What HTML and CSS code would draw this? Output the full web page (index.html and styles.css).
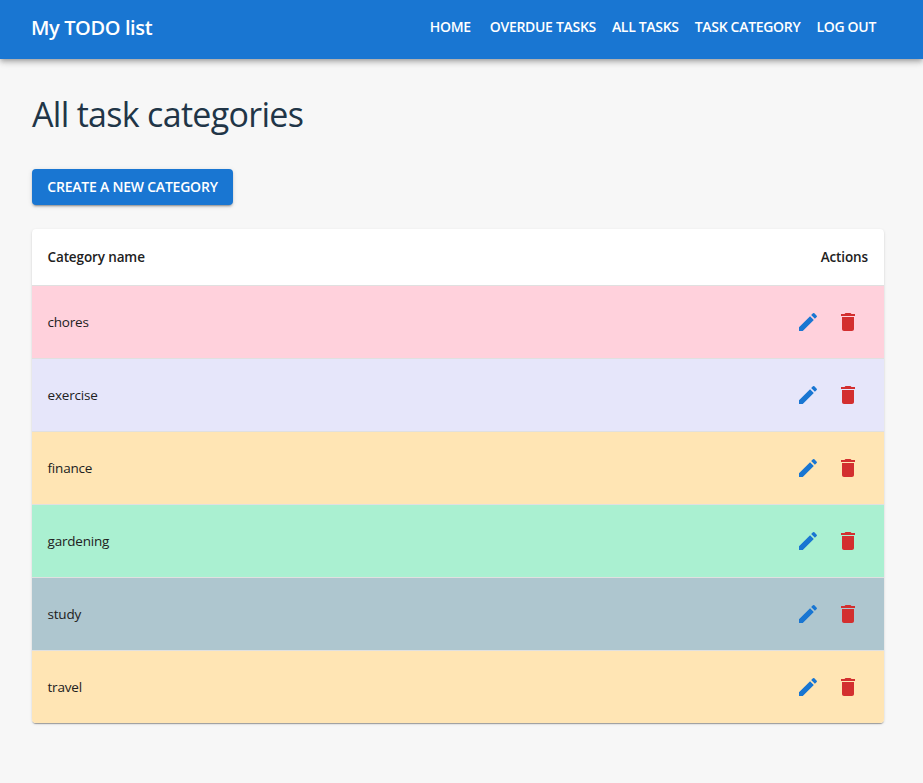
FILE: index.html
```html
<!DOCTYPE html>
<html lang="en">
<head>
<meta charset="utf-8">
<title>My TODO list</title>
<link rel="stylesheet" href="styles.css">
</head>
<body>
<svg class="sprite" width="0" height="0">
  <symbol id="edit" viewBox="0 0 24 24"><path d="M3 17.25V21h3.75L17.81 9.94l-3.75-3.75L3 17.25zM20.71 7.04c.39-.39.39-1.02 0-1.41l-2.34-2.34a.9959.9959 0 0 0-1.41 0l-1.83 1.83 3.75 3.75 1.83-1.83z"/></symbol>
  <symbol id="delete" viewBox="0 0 24 24"><path d="M6 19c0 1.1.9 2 2 2h8c1.1 0 2-.9 2-2V7H6v12zM19 4h-3.5l-1-1h-5l-1 1H5v2h14V4z"/></symbol>
</svg>
<header class="bar">
  <div class="brand">My TODO list</div>
  <nav class="nav">
    <a class="home">HOME</a><a>OVERDUE TASKS</a><a>ALL TASKS</a><a>TASK CATEGORY</a><a>LOG OUT</a>
  </nav>
</header>
<main class="main">
  <h1>All task categories</h1>
  <button class="create">CREATE A NEW CATEGORY</button>
  <section class="table">
    <div class="row head"><span>Category name</span><span class="actions-label">Actions</span></div>
    <div class="row pink"><span>chores</span><div class="actions"><svg class="edit"><use href="#edit"/></svg><svg class="delete"><use href="#delete"/></svg></div></div>
    <div class="row lavender"><span>exercise</span><div class="actions"><svg class="edit"><use href="#edit"/></svg><svg class="delete"><use href="#delete"/></svg></div></div>
    <div class="row orange"><span>finance</span><div class="actions"><svg class="edit"><use href="#edit"/></svg><svg class="delete"><use href="#delete"/></svg></div></div>
    <div class="row green"><span>gardening</span><div class="actions"><svg class="edit"><use href="#edit"/></svg><svg class="delete"><use href="#delete"/></svg></div></div>
    <div class="row blue"><span>study</span><div class="actions"><svg class="edit"><use href="#edit"/></svg><svg class="delete"><use href="#delete"/></svg></div></div>
    <div class="row orange"><span>travel</span><div class="actions"><svg class="edit"><use href="#edit"/></svg><svg class="delete"><use href="#delete"/></svg></div></div>
  </section>
</main>
</body>
</html>
```

FILE: styles.css
```css
* { box-sizing: border-box; }
body { margin: 0; min-height: 783px; background: #f7f7f7; color: #212121; font-family: "Segoe UI", "Open Sans", "Noto Sans", sans-serif; font-size: 13.5px; letter-spacing: -.2px; }
.sprite { display: block; height: 0; }
.bar { height: 59px; padding: 0 47px 4px 31px; display: flex; align-items: center; justify-content: space-between; background: #1976d2; color: #fff; box-shadow: 0 2px 4px -1px rgba(0,0,0,.2), 0 4px 5px rgba(0,0,0,.14), 0 1px 10px rgba(0,0,0,.12); }
.brand { font-size: 20px; font-weight: 600; letter-spacing: -.38px; white-space: nowrap; }
.nav { display: flex; gap: 16px; padding-bottom: 2px; font-size: 14px; font-weight: 600; letter-spacing: -.31px; white-space: nowrap; }
.home { margin-right: 3px; }
.main { padding: 30px 39px 0 32px; }
h1 { margin: 0; height: 50px; line-height: 50px; font-size: 34px; font-weight: 400; letter-spacing: -.7px; color: #213547; white-space: nowrap; }
.create { display: block; margin: 30px 0 24px; width: 201px; height: 36px; padding: 0 0 2px; border: 0; border-radius: 4px; background: #1976d2; color: #fff; font: 600 14px "Segoe UI", "Open Sans", sans-serif; letter-spacing: -.22px; white-space: nowrap; box-shadow: 0 3px 1px -2px rgba(0,0,0,.2), 0 2px 2px rgba(0,0,0,.14), 0 1px 5px rgba(0,0,0,.12); }
.table { border-radius: 4px; overflow: hidden; background: #fff; box-shadow: 0 2px 1px -1px rgba(0,0,0,.2), 0 1px 1px rgba(0,0,0,.14), 0 1px 3px rgba(0,0,0,.12); }
.row { height: 73px; padding: 0 16px 0 15.5px; display: flex; align-items: center; justify-content: space-between; border-bottom: 1px solid #e0e0e0; }
.head { height: 57px; font-weight: 600; letter-spacing: -.12px; }
.row:last-child { height: 72px; border-bottom: 0; }
.actions { display: flex; gap: 16px; padding-right: 8px; }
.actions svg { width: 24px; height: 24px; }
.edit { fill: #1976d2; }
.delete { fill: #d32f2f; }
.pink { background: #ffd1dc; }
.lavender { background: #e6e6fa; }
.orange { background: #ffe5b4; }
.green { background: #aaf0d1; }
.blue { background: #aec6cf; }
```
